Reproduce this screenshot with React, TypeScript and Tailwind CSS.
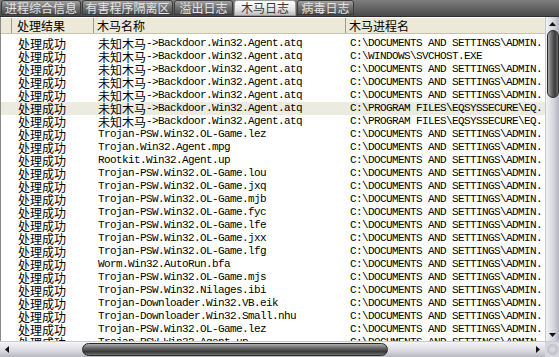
import React from "react";

type Row = { cn?: string; name: string; path: string; hl?: boolean };

const A = "C:\\DOCUMENTS AND SETTINGS\\ADMIN.";
const P = "C:\\PROGRAM FILES\\EQSYSSECURE\\EQ.";
const rows: Row[] = [
  { cn: "未知木马", name: "->Backdoor.Win32.Agent.atq", path: A },
  { cn: "未知木马", name: "->Backdoor.Win32.Agent.atq", path: "C:\\WINDOWS\\SVCHOST.EXE" },
  { cn: "未知木马", name: "->Backdoor.Win32.Agent.atq", path: A },
  { cn: "未知木马", name: "->Backdoor.Win32.Agent.atq", path: A },
  { cn: "未知木马", name: "->Backdoor.Win32.Agent.atq", path: A },
  { cn: "未知木马", name: "->Backdoor.Win32.Agent.atq", path: P, hl: true },
  { cn: "未知木马", name: "->Backdoor.Win32.Agent.atq", path: P },
  { name: "Trojan-PSW.Win32.OL-Game.lez", path: A },
  { name: "Trojan.Win32.Agent.mpg", path: A },
  { name: "Rootkit.Win32.Agent.up", path: A },
  { name: "Trojan-PSW.Win32.OL-Game.lou", path: A },
  { name: "Trojan-PSW.Win32.OL-Game.jxq", path: A },
  { name: "Trojan-PSW.Win32.OL-Game.mjb", path: A },
  { name: "Trojan-PSW.Win32.OL-Game.fyc", path: A },
  { name: "Trojan-PSW.Win32.OL-Game.lfe", path: A },
  { name: "Trojan-PSW.Win32.OL-Game.jxx", path: A },
  { name: "Trojan-PSW.Win32.OL-Game.lfg", path: A },
  { name: "Worm.Win32.AutoRun.bfa", path: A },
  { name: "Trojan-PSW.Win32.OL-Game.mjs", path: A },
  { name: "Trojan-PSW.Win32.Nilages.ibi", path: A },
  { name: "Trojan-Downloader.Win32.VB.eik", path: A },
  { name: "Trojan-Downloader.Win32.Small.nhu", path: A },
  { name: "Trojan-PSW.Win32.OL-Game.lez", path: A },
  { name: "Trojan-PSW.Win32.Agent.up", path: A },
];

const cjk = "font-['Noto_Sans_CJK_SC',sans-serif] text-[12px]";
const mono = "font-['Liberation_Mono',monospace] text-[11px] tracking-[-0.6px]";

const tabs = [
  { label: "进程综合信息", w: "w-[80px]" },
  { label: "有害程序隔离区", w: "w-[91px]" },
  { label: "溢出日志", w: "w-[59px]" },
  { label: "木马日志", w: "w-[62px]", active: true },
  { label: "病毒日志", w: "w-[57px]" },
];

export default function App() {
  return (
    <div className="w-[559px] h-[357px] overflow-hidden bg-white flex flex-col">
      {/* tab bar */}
      <div className="h-[17px] shrink-0 flex items-end gap-[1px] pl-[1px] bg-[linear-gradient(to_bottom,#7e7e7e,#4a4a4a)] border-b border-[#2e2e2e]">
        {tabs.map((t) => (
          <div
            key={t.label}
            className={
              t.active
                ? `${t.w} h-[16px] flex items-center justify-center rounded-t-[3px] border border-[#9a9a9a] bg-[linear-gradient(to_bottom,#ffffff,#e6e6e6_60%,#bdbdbd)] text-[#3a3a3a] leading-none ${cjk}`
                : `${t.w} h-[15px] mb-[1px] flex items-center justify-center rounded-t-[3px] border border-[#3c3c3c] bg-[linear-gradient(to_bottom,#a2a2a2,#747474_45%,#4e4e4e)] text-[#e4e4e4] leading-none ${cjk}`
            }
          >
            {t.label}
          </div>
        ))}
      </div>

      <div className="flex flex-1 min-h-0">
        {/* table */}
        <div className="flex-1 min-w-0 flex flex-col border-l border-[#8a8a8a] overflow-hidden">
          <div className="h-[17px] shrink-0 flex bg-[#ece9d8] border-b border-[#c5c2b2] border-t border-t-white">
            <div className="w-[11px] border-r border-[#9d9a8c]" />
            <div className={`w-[82px] pl-[5px] border-r border-[#9d9a8c] leading-[15px] text-black ${cjk}`}>处理结果</div>
            <div className={`w-[252px] pl-[3px] border-r border-[#9d9a8c] leading-[15px] text-black ${cjk}`}>木马名称</div>
            <div className={`flex-1 pl-[3px] leading-[15px] text-black whitespace-nowrap ${cjk}`}>木马进程名</div>
          </div>
          <div className="pt-[3px] flex flex-col">
            {rows.map((r, i) => (
              <div key={i} className={`h-[13px] shrink-0 flex items-center text-black whitespace-nowrap ${r.hl ? "bg-[#ecebe0]" : ""}`}>
                <div className="w-[12px]" />
                <div className={`w-[82px] pl-[5px] leading-[13px] ${cjk}`}>处理成功</div>
                <div className="w-[252px] pl-[3px] leading-[13px] flex items-center">
                  {r.cn && <span className={cjk}>{r.cn}</span>}
                  <span className={mono}>{r.name}</span>
                </div>
                <div className={`flex-1 pl-[3px] leading-[13px] overflow-hidden ${mono}`}>{r.path}</div>
              </div>
            ))}
          </div>
        </div>

        {/* vertical scrollbar */}
        <div className="w-[14px] shrink-0 flex flex-col bg-[linear-gradient(to_right,#f2f2f6,#d4d4dc_60%,#b4b4c0)] border-l border-[#c8c8d0]">
          <div className="h-[13px] flex items-center justify-center">
            <svg width="7" height="4" viewBox="0 0 7 4"><path d="M3.5 0L7 4H0z" fill="#111" /></svg>
          </div>
          <div className="mx-auto w-[12px] h-[68px] rounded-full border border-[#2a2a2a] bg-[linear-gradient(to_right,#a8a8a8,#6a6a6a_35%,#3a3a3a_70%,#6e6e6e)]" />
          <div className="flex-1" />
          <div className="h-[13px] flex items-center justify-center">
            <svg width="7" height="4" viewBox="0 0 7 4"><path d="M0 0H7L3.5 4z" fill="#111" /></svg>
          </div>
        </div>
      </div>

      {/* horizontal scrollbar */}
      <div className="h-[16px] shrink-0 flex bg-[linear-gradient(to_bottom,#f6f6f8,#d8d8e0_60%,#b8b8c4)] border-t border-[#c8c8d0]">
        <div className="w-[14px] flex items-center justify-center">
          <svg width="4" height="7" viewBox="0 0 4 7"><path d="M0 3.5L4 0V7z" fill="#111" /></svg>
        </div>
        <div className="flex-1 flex items-center">
          <div className="ml-[68px] w-[306px] h-[13px] rounded-full border border-[#2a2a2a] bg-[linear-gradient(to_bottom,#b0b0b0,#6a6a6a_35%,#383838_70%,#707070)]" />
        </div>
        <div className="w-[14px] flex items-center justify-center">
          <svg width="4" height="7" viewBox="0 0 4 7"><path d="M4 3.5L0 0V7z" fill="#111" /></svg>
        </div>
        <div className="w-[14px] flex items-center justify-center bg-[#d6d6de]">
          <div className="w-[11px] h-[11px] rounded-full bg-[radial-gradient(circle,#e0e0e6,#b8b8c4)] border border-[#c0c0cc]" />
        </div>
      </div>
    </div>
  );
}
